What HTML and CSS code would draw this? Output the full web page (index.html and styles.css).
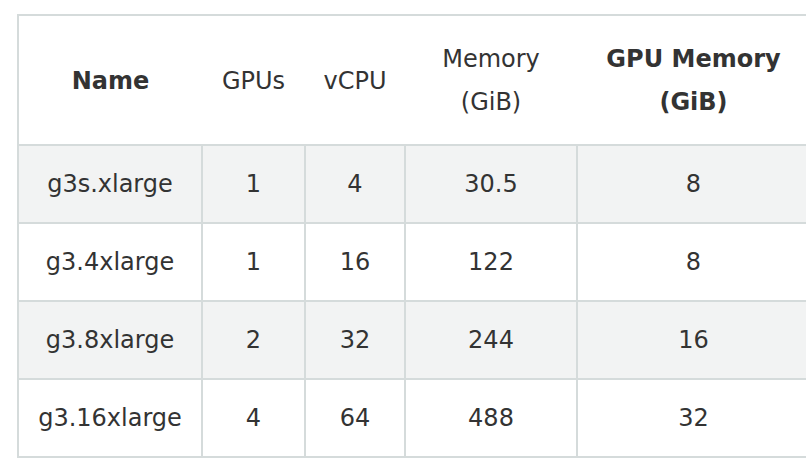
FILE: index.html
```html
<!DOCTYPE html>
<html>
<head>
<meta charset="utf-8">
<link rel="stylesheet" href="styles.css">
</head>
<body>
<table class="spec">
  <colgroup>
    <col class="c-name">
    <col class="c-gpu">
    <col class="c-vcpu">
    <col class="c-mem">
    <col class="c-gmem">
  </colgroup>
  <thead>
    <tr>
      <th class="strong">Name</th>
      <th>GPUs</th>
      <th>vCPU</th>
      <th>Memory<br>(GiB)</th>
      <th class="strong">GPU Memory<br>(GiB)</th>
    </tr>
  </thead>
  <tbody>
    <tr class="alt"><td>g3s.xlarge</td><td>1</td><td>4</td><td>30.5</td><td>8</td></tr>
    <tr><td>g3.4xlarge</td><td>1</td><td>16</td><td>122</td><td>8</td></tr>
    <tr class="alt"><td>g3.8xlarge</td><td>2</td><td>32</td><td>244</td><td>16</td></tr>
    <tr><td>g3.16xlarge</td><td>4</td><td>64</td><td>488</td><td>32</td></tr>
  </tbody>
</table>
</body>
</html>
```
FILE: styles.css
```css
html, body {
  margin: 0;
  padding: 0;
  background: #ffffff;
}
body {
  font-family: "DejaVu Sans", "Open Sans", sans-serif;
  color: #333333;
}
.spec {
  margin: 14px 0 0 17px;
  border-collapse: collapse;
  table-layout: fixed;
  width: 792px;
  font-size: 24px;
}
.c-name { width: 184px; }
.c-gpu { width: 103px; }
.c-vcpu { width: 100px; }
.c-mem { width: 172px; }
.c-gmem { width: 233px; }
.spec th {
  font-weight: 400;
  text-align: center;
  line-height: 43px;
  height: 86px;
  padding: 22px 2px 20px;
  border-top: 2px solid #d5dbdb;
  border-bottom: 2px solid #d5dbdb;
  white-space: nowrap;
}
.spec th:first-child { border-left: 2px solid #d5dbdb; }
.spec th.strong { font-weight: 700; }
.spec td {
  text-align: center;
  line-height: 43px;
  height: 43px;
  padding: 17px 2px 16px;
  border: 2px solid #d5dbdb;
  white-space: nowrap;
}
.spec tr.alt td { background: #f2f3f3; }
```
